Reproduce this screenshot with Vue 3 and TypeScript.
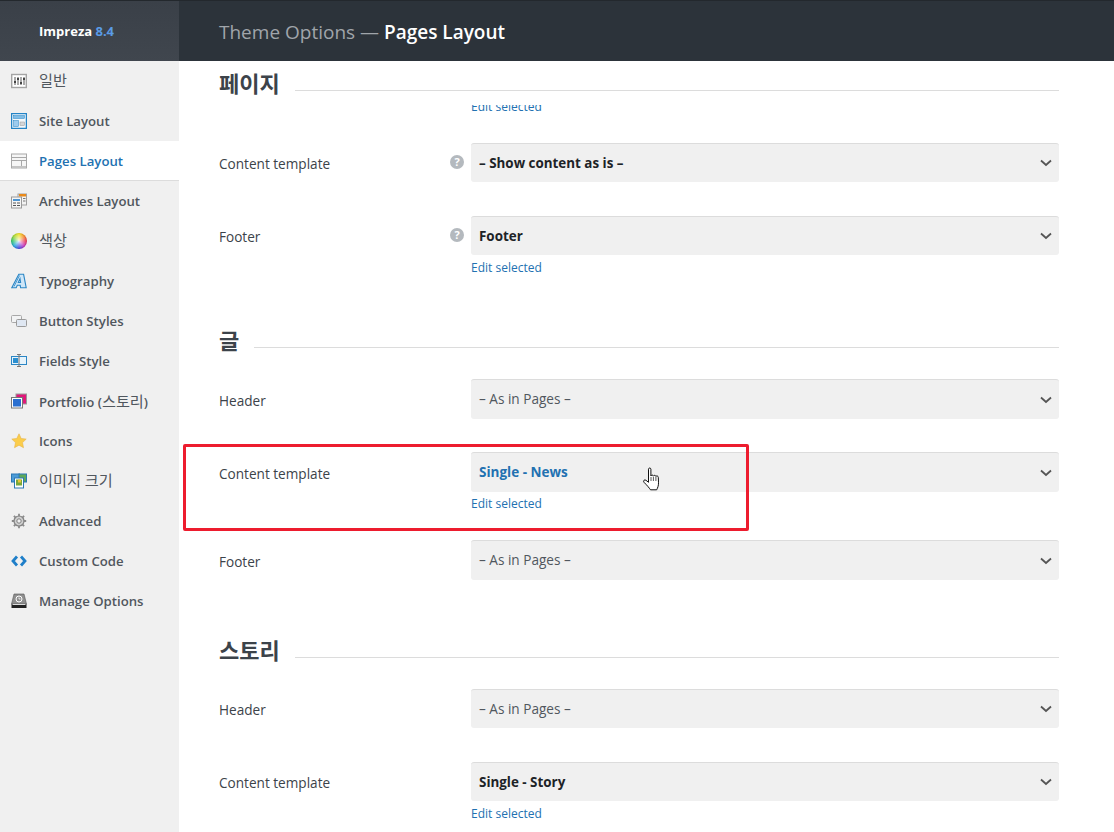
<script setup lang="ts">
interface Row { label: string; value: string; kind?: 'bold' | 'blue'; help?: boolean; edit?: boolean }
interface Section { title: string; tall?: boolean; rows: Row[] }

const first: Row[] = [
  { label: 'Content template', value: '– Show content as is –', kind: 'bold', help: true },
  { label: 'Footer', value: 'Footer', kind: 'bold', help: true, edit: true },
]
const sections: Section[] = [
  {
    title: '글',
    tall: true,
    rows: [
      { label: 'Header', value: '– As in Pages –' },
      { label: 'Content template', value: 'Single - News', kind: 'blue', edit: true },
      { label: 'Footer', value: '– As in Pages –' },
    ],
  },
  {
    title: '스토리',
    rows: [
      { label: 'Header', value: '– As in Pages –' },
      { label: 'Content template', value: 'Single - Story', kind: 'bold', edit: true },
    ],
  },
]
</script>

<template>
  <div class="page">
    <aside class="side">
      <div class="brand">Impreza <span class="ver">8.4</span></div>
      <nav class="nav">
        <a class="item">
          <svg viewBox="0 0 16 16"><rect x=".7" y="1.500" width="14.600" height="13" fill="#fff" stroke="#a4a4a4" stroke-width="1.400"/><path d="M4 4v8M7 4v8M10 4v8M13 4v8" stroke="#555"/><path d="M3 9h2M6 6h2M9 10h2M12 6h2" stroke="#222" stroke-width="1.600"/></svg>
          <span class="ko">일반</span>
        </a>
        <a class="item">
          <svg viewBox="0 0 16 16"><rect x=".6" y=".6" width="14.800" height="14.800" fill="#f4f8fb" stroke="#2484c6" stroke-width="1.300"/><rect x="2.500" y="2.500" width="11" height="3" fill="#7fbce6" stroke="#2484c6" stroke-width=".5"/><rect x="2.500" y="7.500" width="5" height="6" fill="#9ccbee" stroke="#2484c6" stroke-width=".5"/><rect x="9" y="9" width="4.500" height="3.500" fill="#d4d6d8" stroke="#9a9a9a" stroke-width=".5"/></svg>
          <span>Site Layout</span>
        </a>
        <a class="item active">
          <svg viewBox="0 0 16 16"><rect x=".5" y="1" width="15" height="14" fill="#f6f6f6" stroke="#a8a8a8"/><path d="M1 4.500h14M1 7.500h14M10.500 8v5" stroke="#a8a8a8"/><rect x="1" y="13" width="14" height="2" fill="#c4c4c4"/></svg>
          <span>Pages Layout</span>
        </a>
        <a class="item">
          <svg viewBox="0 0 16 16"><rect x="7" y="1" width="8.500" height="11" fill="#f3f3f3" stroke="#a0a0a0"/><rect x="8" y="1" width="7" height="2.500" fill="#e98a1b"/><path d="M12 5.500h2.500M12 8h2.500" stroke="#777"/><rect x=".5" y="4" width="10" height="11" fill="#f5f5f5" stroke="#9a9a9a"/><rect x="2" y="6" width="7" height="2" fill="#4c94d1"/><path d="M2 10h3M6 10h3M2 12.500h3M6 12.500h3" stroke="#555"/></svg>
          <span>Archives Layout</span>
        </a>
        <a class="item">
          <span class="wheel"></span>
          <span class="ko">색상</span>
        </a>
        <a class="item">
          <svg viewBox="0 0 16 16"><path d="M.8 14.700h4.400L6.300 12.300h2.900l.4 2.400h5.600L12.600 1.300H7.800zM7.300 9.500 9 5.600l.6 3.900z" fill="#cfe6f7" stroke="#2b86c5" stroke-width="1.100"/><path d="M3 13.500 8.500 2.500" fill="none" stroke="#2b86c5" stroke-width=".8"/></svg>
          <span>Typography</span>
        </a>
        <a class="item">
          <svg viewBox="0 0 16 16"><rect x=".5" y="2.500" width="10" height="7" rx="1" fill="#f2f3f4" stroke="#a8a8a8"/><rect x="5.500" y="6.500" width="10" height="7" rx="1" fill="#dfe7f2" stroke="#9a9a9a"/></svg>
          <span>Button Styles</span>
        </a>
        <a class="item">
          <svg viewBox="0 0 16 16"><rect x=".5" y="3.500" width="15" height="8" fill="#e6f3fb" stroke="#2b86c5"/><rect x="2" y="5" width="5" height="5" fill="#2b8fd0"/><path d="M8 1.500v12M6 1.500h4M6 13.500h4" stroke="#777" fill="none"/></svg>
          <span>Fields Style</span>
        </a>
        <a class="item">
          <svg viewBox="0 0 16 16"><rect x="5" y="1" width="10.500" height="10" fill="#e0187a" stroke="#999"/><rect x=".5" y="4.500" width="11" height="10.500" fill="#fff" stroke="#777"/><rect x="2" y="6" width="8" height="7.500" fill="#2a6fd0"/></svg>
          <span class="mixed">Portfolio (<span class="ko-in">스토리</span>)</span>
        </a>
        <a class="item">
          <svg viewBox="0 0 16 16"><path d="m8 .8 2.200 4.700 5 .6-3.700 3.500 1 5.100L8 12.200l-4.500 2.500 1-5.100L.8 6.100l5-.6z" fill="#fbcd4b" stroke="#e6b44a" stroke-width=".6"/></svg>
          <span>Icons</span>
        </a>
        <a class="item">
          <svg viewBox="0 0 16 16"><rect x=".5" y="1" width="8" height="8" fill="#4c9bd6" stroke="#2b78b5"/><rect x="8" y="1" width="7.500" height="8" fill="#5ea85a" stroke="#2b78b5"/><rect x="3.500" y="5" width="9" height="10" fill="#fff" stroke="#2b78b5"/><rect x="5" y="6.500" width="6" height="6" fill="#79a83a"/><rect x="7" y="6.500" width="3" height="3" fill="#e9c53a"/></svg>
          <span class="ko">이미지 크기</span>
        </a>
        <a class="item">
          <svg viewBox="0 0 16 16"><circle cx="8" cy="8" r="5" fill="#d0d0d0" stroke="#808080" stroke-width="1.200"/><circle cx="8" cy="8" r="2.200" fill="#f0f0f0" stroke="#808080"/><path d="M8 .8v2.400M8 12.800v2.400M.8 8h2.400M12.800 8h2.400M2.900 2.900l1.700 1.700M11.400 11.400l1.700 1.700M2.900 13.100l1.700-1.700M11.400 4.600l1.700-1.700" stroke="#8a8a8a" stroke-width="1.800"/></svg>
          <span>Advanced</span>
        </a>
        <a class="item">
          <svg viewBox="0 0 16 16"><path d="M6 3.500 2 8l4 4.500M10 3.500l4 4.500-4 4.500" fill="none" stroke="#1f7fc9" stroke-width="2.800"/></svg>
          <span>Custom Code</span>
        </a>
        <a class="item">
          <svg viewBox="0 0 16 16"><path d="M3 1h10l2.500 10h-15z" fill="#8f8f8f" stroke="#555" stroke-width=".6"/><rect x=".5" y="11" width="15" height="4" fill="#222"/><rect x="1.500" y="11" width="13" height="1" fill="#ddd"/><circle cx="8" cy="6" r="3" fill="none" stroke="#fff"/><path d="M8 4.500V6h1.500" fill="none" stroke="#fff" stroke-width=".8"/></svg>
          <span>Manage Options</span>
        </a>
      </nav>
    </aside>

    <main class="main">
      <header class="top">Theme Options — <b>Pages Layout</b></header>
      <div class="body">
        <div class="head first"><h2>페이지</h2></div>
        <div class="clip"><a class="edit">Edit selected</a></div>

        <div v-for="r in first" :key="r.label" class="row" :class="{ linked: r.edit }">
          <div class="label">{{ r.label }}<i v-if="r.help" class="help">?</i></div>
          <div class="field">
            <div class="slot">
              <div class="select" :class="r.kind">
                <span class="value">{{ r.value }}</span>
                <svg class="chev" viewBox="0 0 12 8"><path d="m1 1.500 5 4.500 5-4.500" fill="none" stroke="#555" stroke-width="1.800"/></svg>
              </div>
            </div>
            <a v-if="r.edit" class="edit">Edit selected</a>
          </div>
        </div>

        <section v-for="s in sections" :key="s.title" class="section" :class="{ tall: s.tall }">
          <div class="head"><h2>{{ s.title }}</h2></div>
          <div v-for="r in s.rows" :key="r.label" class="row" :class="{ linked: r.edit }">
            <div class="label">{{ r.label }}</div>
            <div class="field">
              <div class="slot">
                <div class="select" :class="r.kind">
                  <span class="value">{{ r.value }}</span>
                  <svg class="chev" viewBox="0 0 12 8"><path d="m1 1.500 5 4.500 5-4.500" fill="none" stroke="#555" stroke-width="1.800"/></svg>
                </div>
              </div>
              <a v-if="r.edit" class="edit">Edit selected</a>
            </div>
          </div>
        </section>
      </div>
    </main>

    <div class="mark"></div>
    <svg class="hand" viewBox="0 0 18 25">
      <path d="M6.500 2.200c0-1.600 2.400-1.600 2.400 0V9c.4-1.300 2.300-1.300 2.500.2.400-1.200 2.300-1.200 2.500.3.500-1 2.300-.7 2.400.8l.2 5.500c.1 2.800-.8 5-1.800 7H8.500c-1.400-2-3-4-6.500-7.500-1.300-1.500.6-3.200 2-2l2.500 2z" fill="#fff" stroke="#111" stroke-width="1"/>
      <path d="M9 10v4M11.400 10v4M13.900 10v4" stroke="#111" stroke-width=".7"/>
    </svg>
  </div>
</template>

<style>
html, body { margin: 0; height: 100%; overflow: hidden; background: #fff; }
</style>

<style scoped>
.page {
  position: relative;
  display: flex;
  width: 1114px;
  height: 832px;
  overflow: hidden;
  font-family: "Open Sans", "Noto Sans CJK KR", sans-serif;
  font-size: 13.6px;
  color: #3c434a;
}
.side { width: 179px; flex: none; background: #f0f0f0; display: flex; flex-direction: column; }
.brand {
  height: 60px;
  border-top: 1px solid #23282d;
  background: linear-gradient(#3a4048, #40464e);
  color: #fff;
  font-weight: 700;
  font-size: 13px;
  line-height: 60px;
  padding-left: 39px;
}
.ver { color: #5a9be6; }
.nav { display: flex; flex-direction: column; }
.item {
  display: flex;
  align-items: center;
  gap: 12px;
  height: 40px;
  padding-left: 11px;
  box-sizing: border-box;
  color: #50575e;
  font-weight: 600;
  font-size: 13.2px;
}
.item svg, .wheel { width: 16px; height: 16px; flex: none; }
.wheel {
  border-radius: 50%;
  background:
    radial-gradient(circle, rgba(255, 255, 255, .85) 0, rgba(255, 255, 255, 0) 65%),
    conic-gradient(#f2e32c, #f5902e, #e93a5a, #c23ac0, #4a4ae0, #2aa8e0, #35c46a, #a8d83a, #f2e32c);
  box-shadow: inset 0 0 0 1px rgba(0, 0, 0, .08);
}
.ko { font-size: 15.200px; font-weight: 400; margin-top: -5px; }
.mixed { margin-top: -3px; }
.ko-in { font-size: 15.200px; font-weight: 400; }
.item.active { background: #fff; color: #2271b1; border-bottom: 1px solid #dcdcdc; }
.main { flex: 1; min-width: 0; display: flex; flex-direction: column; }
.top {
  height: 60px;
  border-top: 1px solid #23282d;
  background: #2c333a;
  color: #a0a5aa;
  font-size: 19px;
  line-height: 62px;
  padding-left: 40px;
}
.top b { color: #fff; font-weight: 600; }
.body { padding: 0 55px 0 40px; }
.head {
  display: flex;
  align-items: center;
  gap: 15px;
  height: 32px;
  margin-bottom: 23px;
}
.head.first { margin: 6px 0 0; }
.head h2 {
  margin: 0;
  font-size: 22px;
  font-weight: 600;
  line-height: 32px;
  color: #3c434a;
}
.head::after { content: ""; flex: 1; height: 1px; background: #dcdcdc; margin-top: 14px; }
.clip { height: 8px; margin: 6px 0 30px; padding-left: 252px; overflow: hidden; }
.clip .edit { margin-top: -8px; }
.row { display: flex; height: 73px; }
.row.linked { height: 88px; }
.label {
  width: 252px;
  flex: none;
  height: 39px;
  line-height: 42px;
  position: relative;
}
.tall .label { line-height: 44px; }
.help {
  position: absolute;
  left: 231px;
  top: 12px;
  width: 14px;
  height: 14px;
  border-radius: 50%;
  background: #b4b9be;
  color: #fff;
  font-style: normal;
  font-weight: 700;
  font-size: 11px;
  line-height: 14px;
  text-align: center;
}
.field { flex: 1; min-width: 0; }
.slot { height: 42px; }
.select {
  height: 39px;
  box-sizing: border-box;
  border-top: 1px solid #dcdcdc;
  border-radius: 3px;
  background: #f0f0f0;
  display: flex;
  align-items: center;
  justify-content: space-between;
  padding: 0 7px 0 8px;
  color: #50575e;
}
.tall .select { height: 40px; }
.value { align-self: flex-start; line-height: 38px; }
.select.bold { font-weight: 700; color: #1d2327; font-size: 13.400px; }
.select.blue { font-weight: 700; color: #2271b1; font-size: 13.500px; }
.chev { width: 12px; height: 8px; }
.edit { display: block; color: #2271b1; font-size: 12px; line-height: 20px; }
.section { margin-top: 21px; }
.section.tall { margin-top: 20px; }
.mark {
  position: absolute;
  left: 183px;
  top: 444px;
  width: 560px;
  height: 81px;
  border: 3px solid #ed1c2e;
  border-radius: 2px;
}
.hand { position: absolute; left: 642px; top: 467px; width: 18px; height: 25px; }
</style>
